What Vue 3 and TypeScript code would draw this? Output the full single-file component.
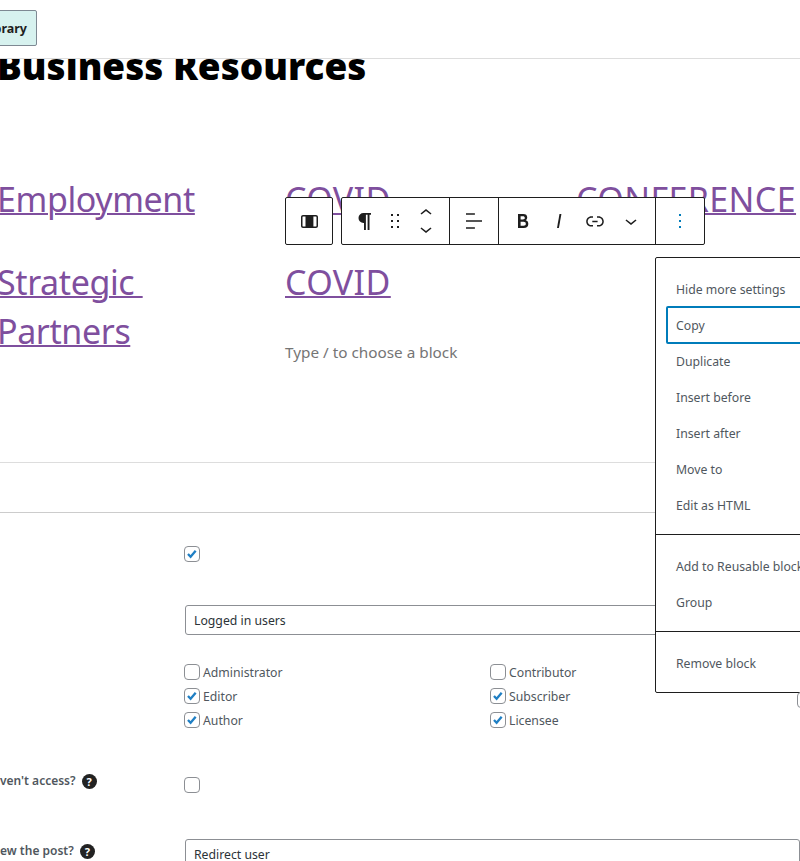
<script setup lang="ts">
const menuGroups: string[][] = [
  ['Hide more settings', 'Copy', 'Duplicate', 'Insert before', 'Insert after', 'Move to', 'Edit as HTML'],
  ['Add to Reusable blocks', 'Group'],
  ['Remove block'],
]
const roleColumns = [
  [
    { name: 'Administrator', on: false },
    { name: 'Editor', on: true },
    { name: 'Author', on: true },
  ],
  [
    { name: 'Contributor', on: false },
    { name: 'Subscriber', on: true },
    { name: 'Licensee', on: true },
  ],
]
</script>

<template>
  <div class="page">
    <header class="topbar">
      <button class="library">Library</button>
    </header>

    <main class="editor">
      <h1 class="title">Business Resources</h1>
      <div class="links">
        <a class="link">Employment</a>
        <a class="link caps">COVID</a>
        <a class="link caps">CONFERENCE</a>
        <a class="link">Strategic&nbsp;<br />Partners</a>
        <div class="second">
          <a class="link caps">COVID</a>
          <p class="placeholder">Type / to choose a block</p>
        </div>
      </div>
    </main>

    <div class="rule-a"></div>
    <div class="rule-b"></div>

    <section class="form">
      <div class="row row-check"><span class="cb on"><svg viewBox="0 0 16 16"><path d="M3.4 8l3 3.2 5.8-7" /></svg></span></div>
      <div class="row row-select"><div class="select">Logged in users</div></div>
      <div class="row row-roles">
        <div v-for="(col, i) in roleColumns" :key="i" class="role-col">
          <label v-for="r in col" :key="r.name" class="role">
            <span class="cb" :class="{ on: r.on }"><svg v-if="r.on" viewBox="0 0 16 16"><path d="M3.4 8l3 3.2 5.8-7" /></svg></span>
            {{ r.name }}
          </label>
        </div>
      </div>
      <div class="row row-access">
        <div class="label">ven't access? <span class="help">?</span></div>
        <span class="cb"></span>
      </div>
      <div class="row row-view">
        <div class="label">ew the post? <span class="help">?</span></div>
        <div class="select wide">Redirect user</div>
      </div>
    </section>

    <div class="toolbars">
      <div class="tb tb-block">
        <button class="tool">
          <svg viewBox="0 0 24 24"><path d="M19 6H6c-1.1 0-2 .9-2 2v9c0 1.1.9 2 2 2h13c1.1 0 2-.9 2-2V8c0-1.1-.9-2-2-2zM5.5 17V8c0-.3.2-.5.5-.5h2.5v10H6c-.3 0-.5-.2-.5-.5zm14 0c0 .3-.2.5-.5.5h-2.6v-10H19c.3 0 .5.2.5.5v9z" /><rect x="10" y="7" width="5" height="11" /></svg>
        </button>
      </div>
      <div class="tb tb-main">
        <div class="tb-group g1">
          <svg class="ic" viewBox="0 0 24 24"><path d="M19 4H11.5a5 5 0 0 0 0 10H12v7h1.9V5.8h1.7V21h1.9V5.8H19z" /></svg>
          <svg class="ic" viewBox="0 0 24 24"><path d="M8 7h2V5H8v2zm0 6h2v-2H8v2zm0 6h2v-2H8v2zm6-14v2h2V5h-2zm0 8h2v-2h-2v2zm0 6h2v-2h-2v2z" /></svg>
          <div class="movers">
            <svg viewBox="0 0 24 24"><path d="M6.5 12.4L12 8l5.5 4.4-.9 1.2L12 10l-4.5 3.6-1-1.2z" /></svg>
            <svg viewBox="0 0 24 24"><path d="M17.5 11.6L12 16l-5.5-4.4.9-1.2L12 14l4.5-3.6 1 1.2z" /></svg>
          </div>
        </div>
        <div class="tb-group g2">
          <svg class="ic" viewBox="0 0 24 24"><path d="M4 19.8h8.9v-1.5H4v1.5zm8.9-15.6H4v1.5h8.9V4.2zm-8.9 7v1.5h16v-1.5H4z" /></svg>
        </div>
        <div class="tb-group g3">
          <svg class="ic" viewBox="0 0 24 24"><path d="M14.7 11.3c1-.6 1.5-1.6 1.5-3 0-2.3-1.3-3.4-4-3.4H7v14h5.8c1.4 0 2.5-.3 3.3-1 .8-.7 1.2-1.7 1.2-2.9.1-1.9-.8-3.1-2.6-3.7zm-5.1-4h2.3c.6 0 1.1.1 1.4.4.3.3.5.7.5 1.2s-.2 1-.5 1.2c-.3.3-.8.4-1.4.4H9.6V7.3zm4.6 9c-.4.3-1 .4-1.7.4H9.6v-3.9h2.9c.7 0 1.3.2 1.7.5.4.3.6.8.6 1.5s-.2 1.2-.6 1.5z" /></svg>
          <svg class="ic" viewBox="0 0 24 24"><path d="M12.5 5L10 19h1.9l2.5-14z" /></svg>
          <svg class="ic" viewBox="0 0 24 24"><path d="M15.6 7.2H14v1.5h1.6c2 0 3.7 1.7 3.7 3.7s-1.7 3.7-3.7 3.7H14v1.5h1.6c2.8 0 5.2-2.3 5.2-5.2 0-2.9-2.3-5.2-5.2-5.2zM4.7 12.4c0-2 1.7-3.7 3.7-3.7H10V7.2H8.4c-2.9 0-5.2 2.3-5.2 5.2 0 2.9 2.3 5.2 5.2 5.2H10v-1.5H8.4c-2 0-3.7-1.7-3.7-3.7zm4.6.9h5.3v-1.5H9.3v1.5z" /></svg>
          <svg class="ic" viewBox="0 0 24 24"><path d="M17.5 11.6L12 16l-5.5-4.4.9-1.2L12 14l4.5-3.6 1 1.2z" /></svg>
        </div>
        <div class="tb-group g4">
          <svg class="ic more" viewBox="0 0 24 24"><path d="M13 19h-2v-2h2v2zm0-6h-2v-2h2v2zm0-6h-2V5h2v2z" /></svg>
        </div>
      </div>
    </div>

    <nav class="menu">
      <div v-for="(group, g) in menuGroups" :key="g" class="menu-group">
        <div v-for="item in group" :key="item" class="menu-item" :class="{ focus: item === 'Copy' }">{{ item }}</div>
      </div>
    </nav>
    <span class="cb stray"></span>
  </div>
</template>

<style scoped>
.page {
  position: relative;
  width: 800px;
  height: 861px;
  overflow: hidden;
  background: #fff;
  font-family: "Noto Sans", "Open Sans", sans-serif;
  color: #50575e;
}
.topbar {
  position: relative;
  z-index: 1;
  height: 59px;
  box-sizing: border-box;
  border-bottom: 1px solid #ddd;
  background: #fff;
  padding-top: 10px;
  margin-bottom: -15px;
}
.library {
  display: block;
  width: 60px;
  height: 36px;
  margin-left: -23px;
  padding: 0 9px 0 0;
  text-align: right;
  font: 700 12.5px "Noto Sans", sans-serif;
  color: #1e1e1e;
  background: #d7f2ef;
  border: 1px solid #7e8993;
  border-radius: 2px;
}
.editor {
  margin-left: -3px;
  height: 418px;
}
.title {
  margin: -1px 0 0;
  font: 900 36.9px/44px "Noto Sans", sans-serif;
  color: #000;
}
.links {
  display: grid;
  grid-template-columns: 288px 291px 1fr;
  row-gap: 34px;
  margin-top: 87px;
  font: 400 34px/49px "Noto Sans", sans-serif;
}
.link {
  color: #7f4f9e;
  text-decoration: underline;
  text-decoration-thickness: 2px;
  white-space: nowrap;
  letter-spacing: -0.4px;
}
.link.caps {
  letter-spacing: 0.4px;
}
.placeholder {
  margin: 33px 0 0;
  font: 400 15.3px/24px "Noto Sans", sans-serif;
  color: #757575;
}
.rule-a {
  height: 1px;
  background: #ddd;
}
.rule-b {
  height: 1px;
  margin-top: 49px;
  background: #ccc;
}
.form {
  font-size: 12.25px;
}
.row {
  display: flex;
  align-items: flex-start;
  padding-left: 184px;
  position: relative;
}
.row-check {
  padding-top: 33px;
  height: 59px;
}
.row-select {
  height: 55px;
  padding-left: 185px;
}
.select {
  box-sizing: border-box;
  width: 600px;
  height: 30px;
  padding: 0 8px;
  border: 1px solid #8c8f94;
  border-radius: 3px;
  font-size: 12.25px;
  line-height: 30px;
  color: #2c3338;
}
.select.wide {
  width: 640px;
}
.row-roles {
  height: 111px;
  gap: 290px;
}
.role-col {
  display: flex;
  flex-direction: column;
  width: 16px;
}
.role {
  display: flex;
  align-items: center;
  gap: 3px;
  height: 24px;
  white-space: nowrap;
  color: #50575e;
}
.cb {
  flex: none;
  display: block;
  box-sizing: border-box;
  width: 16px;
  height: 16px;
  background: #fff;
  border: 1px solid #8c8f94;
  border-radius: 4px;
}
.cb svg {
  display: block;
  width: 14px;
  height: 14px;
  fill: none;
  stroke: #1f7fc4;
  stroke-width: 2.6;
}
.row-access {
  height: 68px;
  padding-left: 0;
}
.row-access .cb {
  margin-left: 96px;
  margin-top: 6px;
}
.row-view {
  padding-left: 0;
}
.row-view .select {
  margin-left: 97px;
}
.label {
  width: 88px;
  white-space: nowrap;
  font-weight: 600;
  font-size: 12px;
  line-height: 18px;
  margin-top: 1px;
  color: #50575e;
  display: flex;
  align-items: center;
  gap: 6px;
}
.row-view .label {
  margin-top: 3px;
}
.help {
  flex: none;
  width: 15px;
  height: 15px;
  border-radius: 50%;
  background: #222;
  color: #fff;
  font: 700 11px/15px "Noto Sans", sans-serif;
  text-align: center;
}
.toolbars {
  position: absolute;
  left: 285px;
  top: 197px;
  display: flex;
  gap: 8px;
}
.tb {
  display: flex;
  box-sizing: border-box;
  height: 48px;
  background: #fff;
  border: 1px solid #1e1e1e;
  border-radius: 2px;
}
.tb-block {
  width: 48px;
  align-items: center;
  justify-content: center;
}
.tool {
  display: flex;
  padding: 0;
  background: none;
  border: 0;
}
.tool svg,
.ic {
  display: block;
  width: 24px;
  height: 24px;
  fill: #1e1e1e;
}
.tb-main {
  width: 364px;
}
.tb-group {
  display: flex;
  align-items: center;
  box-sizing: border-box;
  height: 46px;
  border-right: 1px solid #1e1e1e;
}
.g1 {
  width: 108px;
  padding-left: 10px;
}
.g1 .ic + .ic {
  margin-left: 7px;
}
.movers {
  display: flex;
  flex-direction: column;
  margin-left: 7px;
}
.movers svg {
  display: block;
  width: 24px;
  height: 24px;
  margin: -4px 0;
  fill: #1e1e1e;
}
.g2 {
  width: 49px;
  padding-left: 12px;
}
.g3 {
  width: 157px;
  padding-left: 12px;
  gap: 12px;
}
.g4 {
  flex: 1;
  border-right: 0;
  justify-content: center;
}
.more {
  fill: #007cba;
}
.menu {
  position: absolute;
  left: 655px;
  top: 257px;
  width: 200px;
  background: #fff;
  border: 1px solid #1e1e1e;
  border-radius: 2px;
  box-sizing: border-box;
}
.menu-group {
  padding: 13px 10px 11px;
  border-top: 1px solid #1e1e1e;
}
.menu-group:first-child {
  border-top: 0;
}
.menu-item {
  box-sizing: border-box;
  height: 36px;
  padding: 0 10px;
  font-size: 12.25px;
  line-height: 38px;
  white-space: nowrap;
  color: #50575e;
  border-radius: 2px;
}
.menu-item.focus {
  height: 38px;
  margin: -1px 0;
  line-height: 36px;
  border: 2px solid #007cba;
  padding: 0 8px;
}
.stray {
  position: absolute;
  left: 797px;
  top: 692px;
}
</style>
